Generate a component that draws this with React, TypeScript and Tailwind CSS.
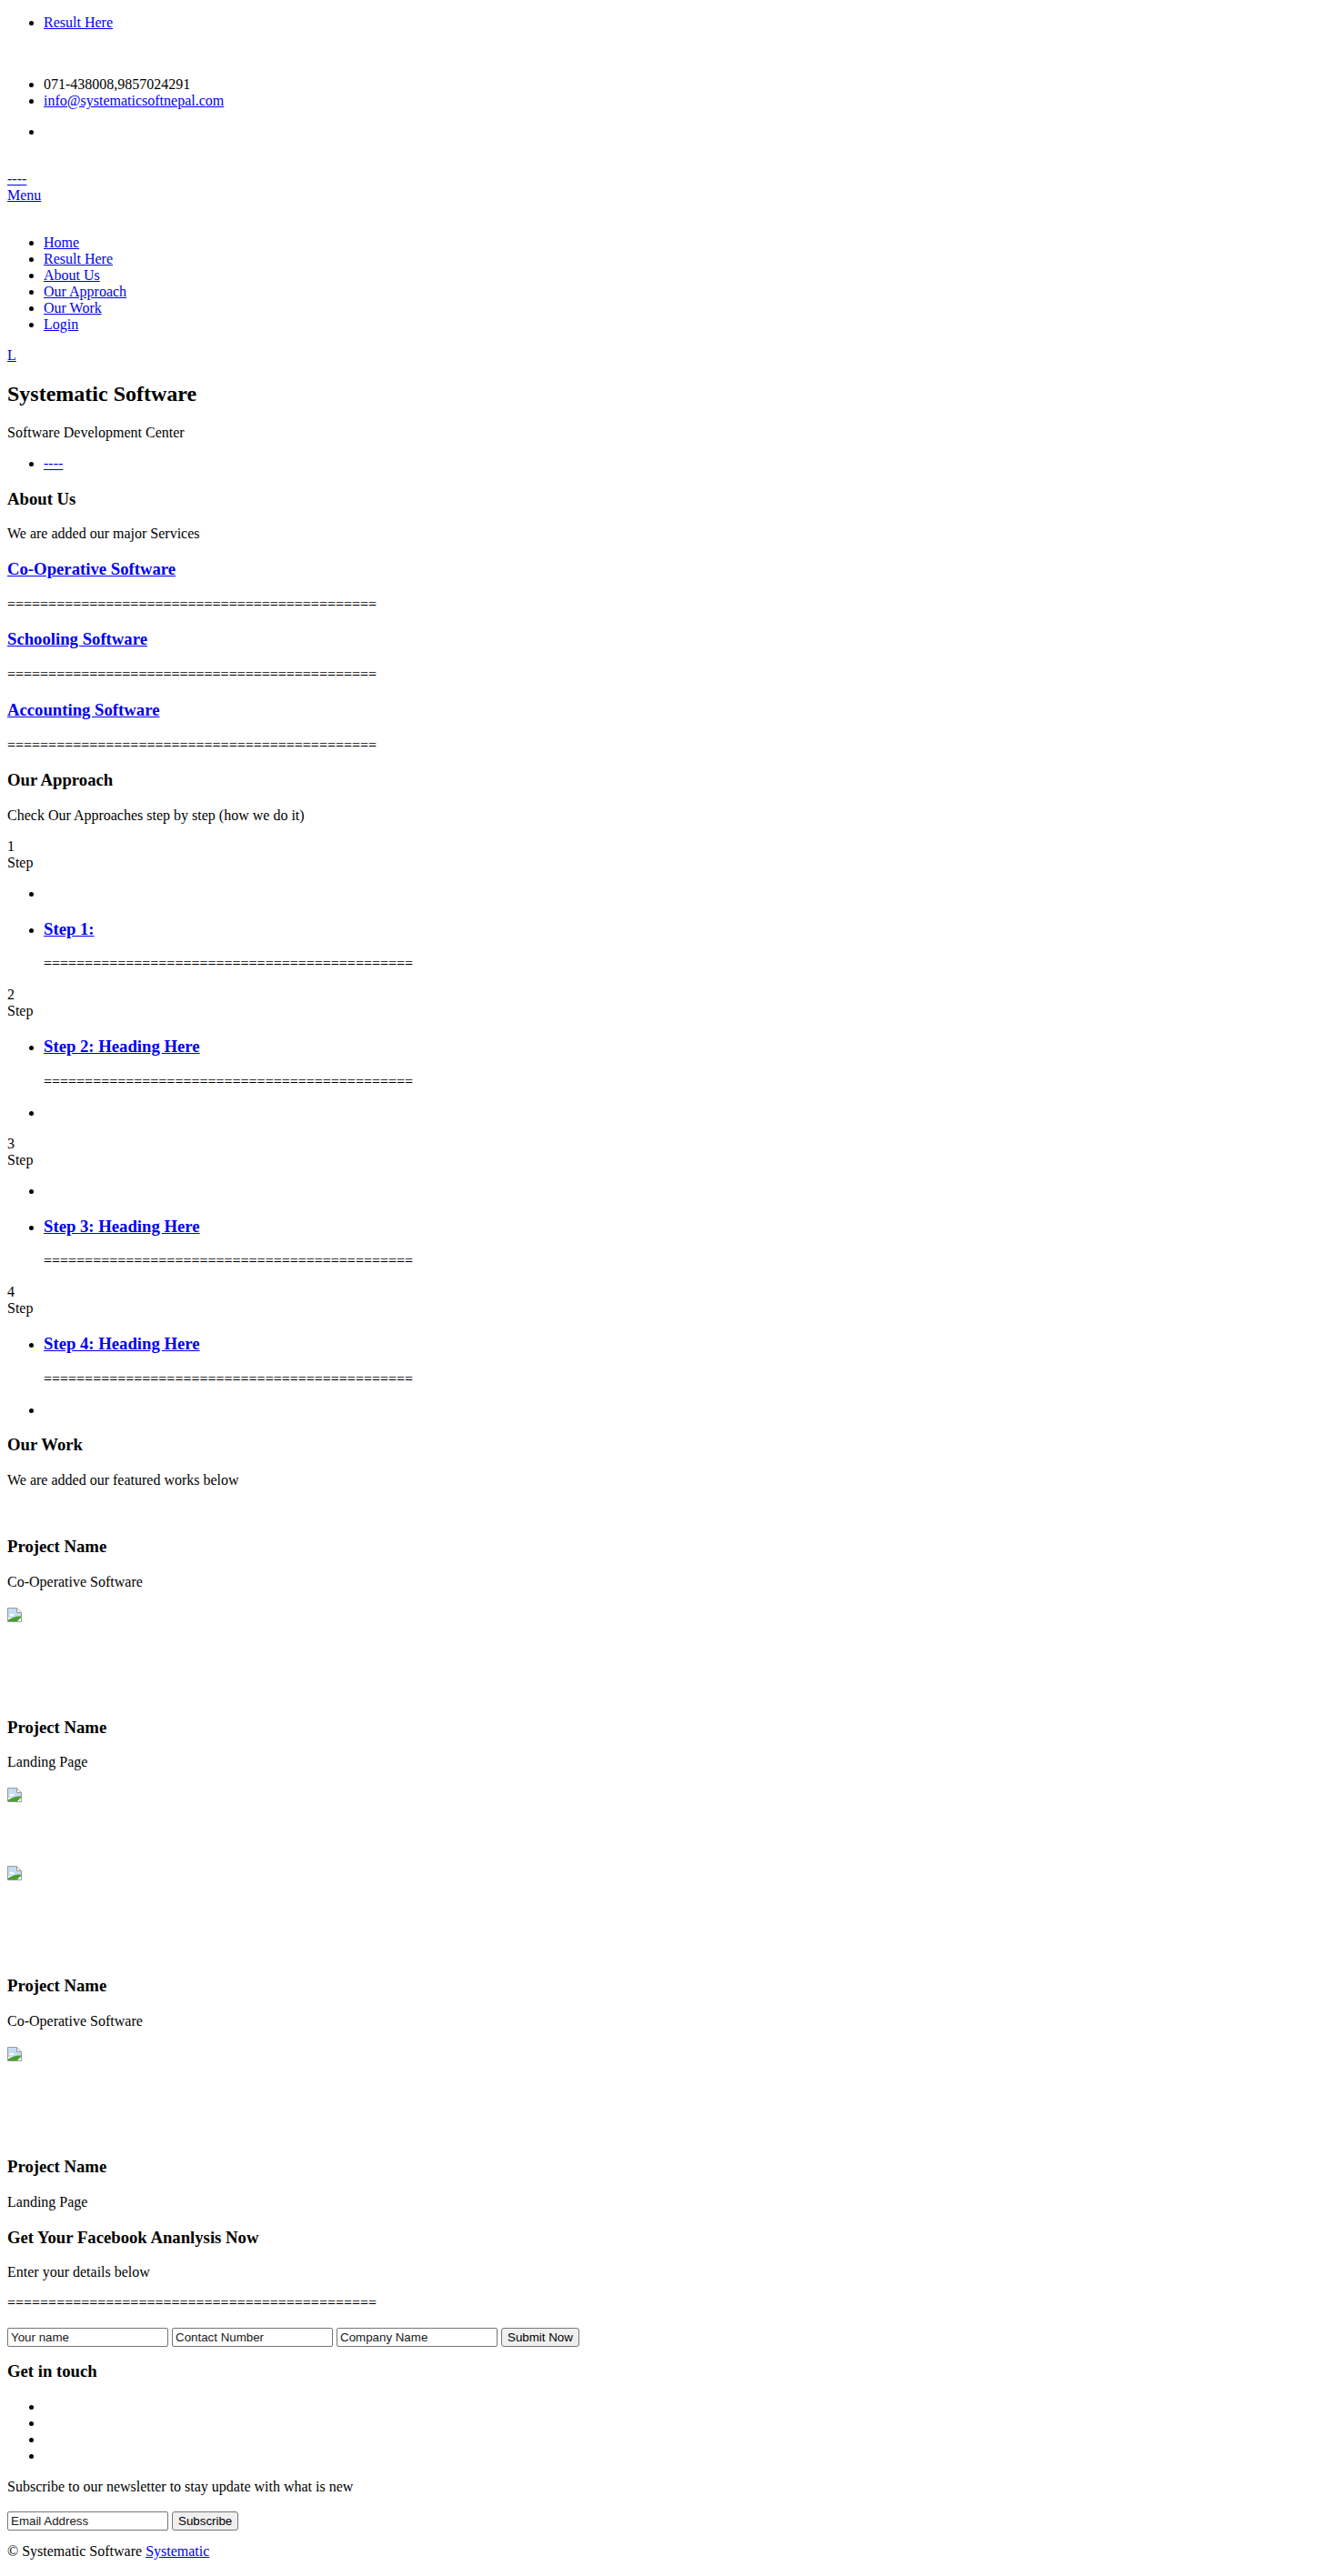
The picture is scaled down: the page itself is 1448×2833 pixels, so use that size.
import React from "react";

const A = ({ children, className = "" }: { children: React.ReactNode; className?: string }) => (
  <a href="#" className={"text-[#0000ee] underline " + className}>
    {children}
  </a>
);

const EQ = "=".repeat(45);

const BrokenImg = () => (
  <svg width="16" height="16" viewBox="0 0 16 16" className="block">
    <path d="M0.5 0.5 H10.5 L15.5 5.5 V15.5 H0.5 Z" fill="#ffffff" stroke="#9a9a9a" />
    <path d="M1 1 H10.3 L10.3 5.7 L15 5.7 V11 L1 11 Z" fill="#c5dcf5" />
    <path d="M10.5 0.8 V5.5 H15.2" fill="#f4f4f4" stroke="#9a9a9a" />
    <ellipse cx="5" cy="8" rx="2.6" ry="1.3" fill="#ffffff" />
    <path d="M1 15 L1 13.5 C4 11.5 8 10 12 9.5 L15 9.5 L15 12 L12.5 15 Z" fill="#4aa02c" />
    <path d="M11 15 L15 11 L15 15 Z" fill="#ffffff" />
  </svg>
);

const inputCls =
  "box-border h-[21px] w-[177px] border border-[#767676] rounded-[2px] bg-white px-[3px] font-['Liberation_Sans',sans-serif] text-[13.33px] text-black placeholder:text-[#1a1a1a] outline-none";
const btnCls =
  "box-border h-[21px] border border-[#767676] rounded-[3px] bg-[#efefef] px-[6px] font-['Liberation_Sans',sans-serif] text-[13.33px] leading-[17px] text-black";

const H3 = ({ children }: { children: React.ReactNode }) => (
  <h3 className="my-[18.72px] text-[18.72px] leading-[22px] font-bold">{children}</h3>
);

const P = ({ children }: { children: React.ReactNode }) => <p className="my-4">{children}</p>;

const StepLabel = ({ n }: { n: string }) => (
  <div>
    <div>{n}</div>
    <div>Step</div>
  </div>
);

export default function App() {
  return (
    <div className="bg-white px-2 font-['Liberation_Serif',serif] text-[16px] leading-[18px] text-black">
      {/* top bar */}
      <ul className="my-4 list-disc pl-10">
        <li>
          <A>Result Here</A>
        </li>
      </ul>
      <div className="h-[18px]" />
      <ul className="my-4 list-disc pl-10">
        <li>071-438008,9857024291</li>
        <li>
          <A>info@systematicsoftnepal.com</A>
        </li>
      </ul>
      <ul className="my-4 list-disc pl-10">
        <li>{"\u00a0"}</li>
      </ul>
      <div className="h-[18px]" />
      <div>
        <A>----</A>
      </div>
      <div>
        <A>Menu</A>
      </div>
      <div className="h-[18px]" />
      <ul className="my-4 list-disc pl-10">
        <li><A>Home</A></li>
        <li><A>Result Here</A></li>
        <li><A>About Us</A></li>
        <li><A>Our Approach</A></li>
        <li><A>Our Work</A></li>
        <li><A>Login</A></li>
      </ul>
      <div>
        <A>L</A>
      </div>

      {/* hero */}
      <h2 className="my-[19.92px] text-[24px] leading-[27px] font-bold">Systematic Software</h2>
      <P>Software Development Center</P>
      <ul className="my-4 list-disc pl-10">
        <li>
          <A>----</A>
        </li>
      </ul>

      {/* about */}
      <H3>About Us</H3>
      <P>We are added our major Services</P>
      <H3>
        <A>Co-Operative Software</A>
      </H3>
      <P>{EQ}</P>
      <H3>
        <A>Schooling Software</A>
      </H3>
      <P>{EQ}</P>
      <H3>
        <A>Accounting Software</A>
      </H3>
      <P>{EQ}</P>

      {/* approach */}
      <H3>Our Approach</H3>
      <P>Check Our Approaches step by step (how we do it)</P>

      <StepLabel n="1" />
      <ul className="my-4 list-disc pl-10">
        <li>{"\u00a0"}</li>
        <li>
          <H3>
            <A>Step 1:</A>
          </H3>
          <P>{EQ}</P>
        </li>
      </ul>

      <StepLabel n="2" />
      <ul className="my-4 list-disc pl-10">
        <li>
          <H3>
            <A>Step 2: Heading Here</A>
          </H3>
          <P>{EQ}</P>
        </li>
        <li>{"\u00a0"}</li>
      </ul>

      <StepLabel n="3" />
      <ul className="my-4 list-disc pl-10">
        <li>{"\u00a0"}</li>
        <li>
          <H3>
            <A>Step 3: Heading Here</A>
          </H3>
          <P>{EQ}</P>
        </li>
      </ul>

      <StepLabel n="4" />
      <ul className="my-4 list-disc pl-10">
        <li>
          <H3>
            <A>Step 4: Heading Here</A>
          </H3>
          <P>{EQ}</P>
        </li>
        <li>{"\u00a0"}</li>
      </ul>

      {/* work */}
      <H3>Our Work</H3>
      <P>We are added our featured works below</P>
      <div className="h-[18px]" />

      <h3 className="mt-[18.72px] mb-[18.72px] text-[18.72px] leading-[22px] font-bold">Project Name</h3>
      <P>Co-Operative Software</P>
      <div className="mt-[19px] h-4 w-4">
        <BrokenImg />
      </div>

      <h3 className="mt-[105px] mb-[18.72px] text-[18.72px] leading-[22px] font-bold">Project Name</h3>
      <P>Landing Page</P>
      <div className="mt-[19px] h-4 w-4">
        <BrokenImg />
      </div>
      <div className="mt-[70px] h-4 w-4">
        <BrokenImg />
      </div>

      <h3 className="mt-[105px] mb-[18.72px] text-[18.72px] leading-[22px] font-bold">Project Name</h3>
      <P>Co-Operative Software</P>
      <div className="mt-[19px] h-4 w-4">
        <BrokenImg />
      </div>

      <h3 className="mt-[105px] mb-[18.72px] text-[18.72px] leading-[22px] font-bold">Project Name</h3>
      <P>Landing Page</P>

      {/* facebook analysis */}
      <H3>Get Your Facebook Ananlysis Now</H3>
      <P>Enter your details below</P>
      <P>{EQ}</P>
      <div className="mt-[18px] flex items-center gap-1">
        <input className={inputCls} placeholder="Your name" />
        <input className={inputCls} placeholder="Contact Number" />
        <input className={inputCls} placeholder="Company Name" />
        <button className={btnCls}>Submit Now</button>
      </div>

      {/* footer */}
      <h3 className="mt-[16px] mb-[18.72px] text-[18.72px] leading-[22px] font-bold">Get in touch</h3>
      <ul className="my-4 list-disc pl-10">
        <li>{"\u00a0"}</li>
        <li>{"\u00a0"}</li>
        <li>{"\u00a0"}</li>
        <li>{"\u00a0"}</li>
      </ul>
      <P>Subscribe to our newsletter to stay update with what is new</P>
      <div className="mt-[18px] flex items-center gap-1">
        <input className={inputCls} placeholder="Email Address" />
        <button className={btnCls}>Subscribe</button>
      </div>
      <p className="mt-[14px] pb-4">
        © Systematic Software <A>Systematic</A>
      </p>
    </div>
  );
}
